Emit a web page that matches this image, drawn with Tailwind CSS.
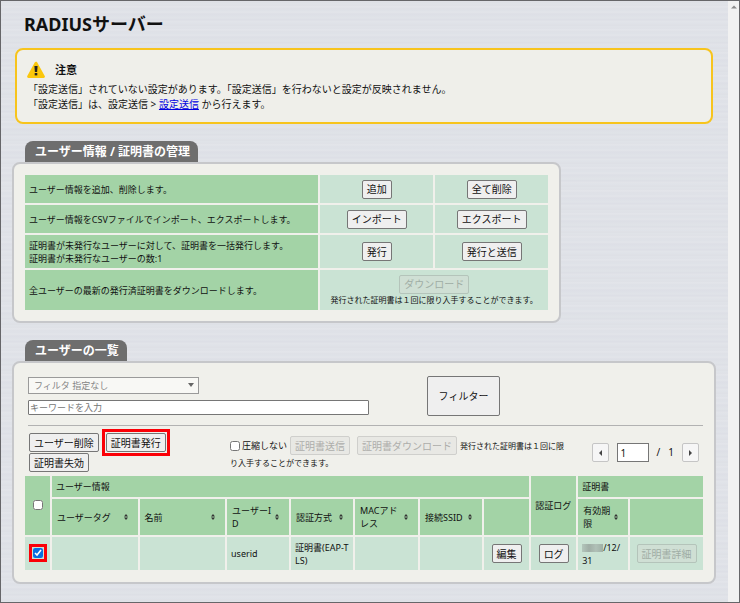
<!DOCTYPE html>
<html lang="ja">
<head>
<meta charset="utf-8">
<meta name="viewport" content="width=device-width, initial-scale=1">
<title>RADIUSサーバー</title>
<script src="https://cdn.jsdelivr.net/npm/@tailwindcss/browser@4"></script>
</head>
<body class="flex min-h-screen border border-[#666669] bg-[#dfe2e8] font-['Noto_Sans','Noto_Sans_CJK_JP',sans-serif] text-[9px] leading-[13px] text-[#111]">
<main class="min-w-0 flex-1 bg-[repeating-linear-gradient(180deg,#e1e3e8_0px,#dddfe5_1px,#e1e4e9_3px,#dee0e6_4px,#e4e6eb_6px,#dfe1e7_7px,#dfe2e8_10px,#e3e5ea_11px,#dddfe6_13px,#e0e3e8_17px,#dcdee5_19px,#e2e4e9_20px,#dfe2e8_23px)] pt-[11px] pr-3 pb-4 pl-[11px]">
  <h1 class="pl-3 text-[18px] leading-6 font-bold">RADIUSサーバー</h1>

  <section class="mx-[3px] mt-3 rounded-lg border-2 border-[#f7c41d] bg-[#efefea] px-[10px] py-[10px]">
    <div class="flex items-center gap-[10px]">
      <svg class="h-[18px] w-[18px]" viewBox="0 0 18 18" aria-hidden="true">
        <path d="M9 2 16.6 15.6H1.4Z" fill="#fbc70c" stroke="#fbc70c" stroke-width="2.6" stroke-linejoin="round"/>
        <path d="M7.4 5h3.2l-.5 6H7.9Z" fill="#222"/><rect x="7.7" y="12" width="2.6" height="2.4" fill="#222"/>
      </svg>
      <h2 class="text-[11px] leading-5 font-bold">注意</h2>
    </div>
    <p class="mt-[2px] pl-px text-[10px] leading-[15px]">「設定送信」されていない設定があります。「設定送信」を行わないと設定が反映されません。<br>「設定送信」は、設定送信 &gt; <a href="#" class="text-[#0000e0] underline">設定送信</a> から行えます。</p>
  </section>

  <h2 class="mt-[17px] ml-[13px] w-fit rounded-t-lg bg-[#6e6e6e] pr-2 pl-[10px] text-[12px] leading-[21px] font-bold text-white">ユーザー情報 / 証明書の管理</h2>
  <section class="w-[78%] rounded-lg border-2 border-[#c6c7ca] bg-[#f0f0eb] px-[9px] pt-[9px] pb-[9px]">
    <table class="w-full table-fixed border-separate border-spacing-[2px]">
      <colgroup><col class="w-[56.5%]"><col><col></colgroup>
      <tbody>
      <tr class="h-7">
        <th class="bg-[#a3d3a6] px-1 text-left font-normal">ユーザー情報を追加、削除します。</th>
        <td class="bg-[#cae3d4] text-center"><button class="h-[19px] rounded-[2px] border border-[#767676] bg-[#efefef] px-1 text-[10px] leading-4">追加</button></td>
        <td class="bg-[#cae3d4] text-center"><button class="h-[19px] rounded-[2px] border border-[#767676] bg-[#efefef] px-1 text-[10px] leading-4">全て削除</button></td>
      </tr>
      <tr class="h-7">
        <th class="bg-[#a3d3a6] px-1 text-left font-normal">ユーザー情報をCSVファイルでインポート、エクスポートします。</th>
        <td class="bg-[#cae3d4] text-center"><button class="h-[19px] rounded-[2px] border border-[#767676] bg-[#efefef] px-1 text-[10px] leading-4">インポート</button></td>
        <td class="bg-[#cae3d4] text-center"><button class="h-[19px] rounded-[2px] border border-[#767676] bg-[#efefef] px-1 text-[10px] leading-4">エクスポート</button></td>
      </tr>
      <tr class="h-[33px]">
        <th class="bg-[#a3d3a6] px-1 text-left font-normal">証明書が未発行なユーザーに対して、証明書を一括発行します。<br>証明書が未発行なユーザーの数:1</th>
        <td class="bg-[#cae3d4] text-center"><button class="h-[19px] rounded-[2px] border border-[#767676] bg-[#efefef] px-1 text-[10px] leading-4">発行</button></td>
        <td class="bg-[#cae3d4] text-center"><button class="h-[19px] rounded-[2px] border border-[#767676] bg-[#efefef] px-1 text-[10px] leading-4">発行と送信</button></td>
      </tr>
      <tr class="h-10">
        <th class="bg-[#a3d3a6] px-1 text-left font-normal">全ユーザーの最新の発行済証明書をダウンロードします。</th>
        <td colspan="2" class="bg-[#cae3d4] text-center text-[8px] leading-3">
          <button disabled class="mx-auto block h-[19px] rounded-[2px] border border-[#b4c4ba] bg-[#cfdfd4] px-1 text-[10px] leading-4 text-[#9fada4]">ダウンロード</button>
          発行された証明書は１回に限り入手することができます。
        </td>
      </tr>
      </tbody>
    </table>
  </section>

  <h2 class="mt-[17px] ml-[13px] w-fit rounded-t-lg bg-[#6e6e6e] pr-2 pl-[10px] text-[12px] leading-[21px] font-bold text-white">ユーザーの一覧</h2>
  <section class="rounded-lg border-2 border-[#c6c7ca] bg-[#f0f0eb] pt-[13px] pr-[9px] pb-[10px] pl-[9px]">
    <form class="mx-[5px] flex items-start">
      <div class="flex w-[341px] flex-col gap-[6px] pt-px">
        <div class="relative w-1/2">
          <select aria-label="フィルタ" class="block h-[17px] w-full appearance-none border border-[#9a9a9a] bg-[#f8f8f5] pl-[5px] text-[9px] leading-[15px] text-[#858585]"><option>フィルタ 指定なし</option></select>
          <svg class="pointer-events-none absolute top-[6px] right-[5px] h-1 w-[6px]" viewBox="0 0 6 4" aria-hidden="true"><path d="M0 0h6L3 4Z" fill="#666"/></svg>
        </div>
        <input type="text" aria-label="キーワード" placeholder="キーワードを入力" class="block h-[15px] w-full rounded-[1px] border border-[#767676] bg-white px-px text-[9px] leading-[13px] placeholder:text-[#757575]">
      </div>
      <button type="button" class="ml-[58px] h-10 w-[73px] rounded-[2px] border border-[#767676] bg-[#efefef] text-[10px]">フィルター</button>
    </form>
    <hr class="mr-[2px] ml-[5px] mt-[9px] border-t border-[#b2b2b2]">

    <div class="mr-[2px] ml-[6px] mt-[7px] flex h-[41px] items-start">
      <div class="flex w-[201px] flex-wrap gap-x-[7px] gap-y-px">
        <button class="h-[19px] rounded-[2px] border border-[#767676] bg-[#efefef] px-1 text-[10px] leading-4">ユーザー削除</button>
        <span class="flex outline-3 outline-offset-1 outline-[#fb0007]"><button class="h-[19px] rounded-[2px] border border-[#767676] bg-[#efefef] px-1 text-[10px] leading-4">証明書発行</button></span>
        <div class="w-full"><button class="h-[19px] rounded-[2px] border border-[#767676] bg-[#efefef] px-1 text-[10px] leading-4">証明書失効</button></div>
      </div>
      <div class="mt-[3px] w-[340px] text-[8px] leading-4">
        <div class="flex h-[19px] items-center whitespace-nowrap">
          <input id="raw" type="checkbox" class="size-[10px]"><label for="raw" class="ml-[2px] text-[9px]">圧縮しない</label>
          <button disabled class="ml-[3px] h-[19px] rounded-[2px] border border-[#cfcfcc] bg-[#e8e8e4] px-1 text-[10px] leading-4 text-[#adadaa]">証明書送信</button>
          <button disabled class="mr-[3px] ml-[7px] h-[19px] rounded-[2px] border border-[#cfcfcc] bg-[#e8e8e4] px-1 text-[10px] leading-4 text-[#adadaa]">証明書ダウンロード</button>
          <span>発行された証明書は１回に限</span>
        </div>
        <span>り入手することができます。</span>
      </div>
      <nav class="mt-[10px] mr-1 ml-auto flex h-[19px] items-center gap-2 text-[10px]">
        <button aria-label="前へ" class="flex h-[19px] w-[17px] items-center justify-center rounded-[2px] border border-[#c5c5c5] bg-[#f6f6f6]"><svg class="h-[6px] w-[3px]" viewBox="0 0 3 6" aria-hidden="true"><path d="M3 0v6L0 3Z" fill="#444"/></svg></button>
        <input aria-label="ページ" value="1" class="h-[19px] w-8 border border-[#767676] bg-white px-[3px]">
        <span>/</span><span>1</span>
        <button aria-label="次へ" class="flex h-[19px] w-[17px] items-center justify-center rounded-[2px] border border-[#c5c5c5] bg-[#f6f6f6]"><svg class="h-[6px] w-[3px]" viewBox="0 0 3 6" aria-hidden="true"><path d="M0 0v6l3-3Z" fill="#444"/></svg></button>
      </nav>
    </div>

    <table class="w-full table-fixed border-separate border-spacing-[2px] break-all">
      <colgroup><col class="w-[25px]"><col class="w-[13%]"><col class="w-[13%]"><col class="w-[62px]"><col class="w-[62px]"><col class="w-[63px]"><col class="w-[62px]"><col class="w-[45px]"><col class="w-[45px]"><col class="w-[50px]"><col></colgroup>
      <thead class="text-left">
      <tr class="h-[21px]">
        <th rowspan="2" class="bg-[#a3d3a6] pb-1 text-center"><input type="checkbox" aria-label="全て選択" class="inline-block size-[10px] align-middle"></th>
        <th colspan="7" class="bg-[#a3d3a6] px-1 font-normal">ユーザー情報</th>
        <th rowspan="2" class="bg-[#a3d3a6] px-1 font-normal">認証ログ</th>
        <th colspan="2" class="bg-[#a3d3a6] px-1 font-normal">証明書</th>
      </tr>
      <tr class="h-9">
        <th class="bg-[#a3d3a6] pr-[10px] pl-[5px] font-normal"><div class="flex items-center"><span class="flex-1">ユーザータグ</span><svg class="h-[6px] w-1" viewBox="0 0 4 6" aria-hidden="true"><path d="M0 2.5 2 0l2 2.5ZM0 3.5h4L2 6Z" fill="#333"/></svg></div></th>
        <th class="bg-[#a3d3a6] pr-[10px] pl-[5px] font-normal"><div class="flex items-center"><span class="flex-1">名前</span><svg class="h-[6px] w-1" viewBox="0 0 4 6" aria-hidden="true"><path d="M0 2.5 2 0l2 2.5ZM0 3.5h4L2 6Z" fill="#333"/></svg></div></th>
        <th class="bg-[#a3d3a6] pr-[10px] pl-[5px] font-normal"><div class="flex items-center"><span class="flex-1">ユーザーID</span><svg class="h-[6px] w-1" viewBox="0 0 4 6" aria-hidden="true"><path d="M0 2.5 2 0l2 2.5ZM0 3.5h4L2 6Z" fill="#333"/></svg></div></th>
        <th class="bg-[#a3d3a6] pr-[10px] pl-[5px] font-normal"><div class="flex items-center"><span class="flex-1">認証方式</span><svg class="h-[6px] w-1" viewBox="0 0 4 6" aria-hidden="true"><path d="M0 2.5 2 0l2 2.5ZM0 3.5h4L2 6Z" fill="#333"/></svg></div></th>
        <th class="bg-[#a3d3a6] pr-[10px] pl-[5px] font-normal"><div class="flex items-center"><span class="flex-1">MACアドレス</span><svg class="h-[6px] w-1" viewBox="0 0 4 6" aria-hidden="true"><path d="M0 2.5 2 0l2 2.5ZM0 3.5h4L2 6Z" fill="#333"/></svg></div></th>
        <th class="bg-[#a3d3a6] pr-[10px] pl-[5px] font-normal"><div class="flex items-center"><span class="flex-1">接続SSID</span><svg class="h-[6px] w-1" viewBox="0 0 4 6" aria-hidden="true"><path d="M0 2.5 2 0l2 2.5ZM0 3.5h4L2 6Z" fill="#333"/></svg></div></th>
        <th class="bg-[#a3d3a6]"></th>
        <th class="bg-[#a3d3a6] pr-[10px] pl-[5px] font-normal"><div class="flex items-center"><span class="flex-1">有効期限</span><svg class="h-[6px] w-1" viewBox="0 0 4 6" aria-hidden="true"><path d="M0 2.5 2 0l2 2.5ZM0 3.5h4L2 6Z" fill="#333"/></svg></div></th>
        <th class="bg-[#a3d3a6]"></th>
      </tr>
      </thead>
      <tbody>
      <tr class="h-[33px]">
        <td class="bg-[#cae3d4] pb-1 text-center"><span class="inline-flex align-middle outline-3 outline-offset-1 outline-[#fb0007]"><input type="checkbox" checked aria-label="userid" class="size-[10px] accent-[#0a6fe0]"></span></td>
        <td class="bg-[#cae3d4]"></td>
        <td class="bg-[#cae3d4]"></td>
        <td class="bg-[#cae3d4] pl-1">userid</td>
        <td class="bg-[#cae3d4] pl-1">証明書(EAP-TLS)</td>
        <td class="bg-[#cae3d4]"></td>
        <td class="bg-[#cae3d4]"></td>
        <td class="bg-[#cae3d4] text-center"><button class="h-[19px] rounded-[2px] border border-[#767676] bg-[#efefef] px-1 text-[10px] leading-4">編集</button></td>
        <td class="bg-[#cae3d4] text-center"><button class="h-[19px] rounded-[2px] border border-[#767676] bg-[#efefef] px-1 text-[10px] leading-4">ログ</button></td>
        <td class="bg-[#cae3d4] pl-1"><span class="inline-block h-2 w-[21px] bg-[linear-gradient(90deg,#b3c6bb,#a0aea6,#b0c0b7,#9fb0a6)] align-middle"></span>/12/<br>31</td>
        <td class="bg-[#cae3d4] text-center"><button disabled class="h-[19px] rounded-[2px] border border-[#b4c4ba] bg-[#cfdfd4] px-1 text-[10px] leading-4 text-[#9fada4]">証明書詳細</button></td>
      </tr>
      </tbody>
    </table>
  </section>
</main>
<div class="w-[11px] bg-[#f1f1f1] pt-1" aria-hidden="true">
  <svg class="mx-auto h-1 w-[6px]" viewBox="0 0 6 4"><path d="M0 3.5 3 .5l3 3Z" fill="#8a8a8a"/></svg>
</div>
</body>
</html>
